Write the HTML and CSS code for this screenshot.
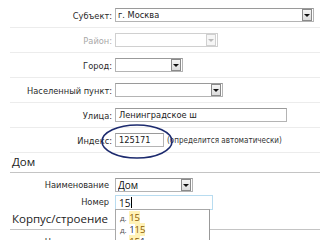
FILE: index.html
```html
<!DOCTYPE html>
<html lang="ru">
<head>
<meta charset="utf-8">
<link rel="stylesheet" href="styles.css">
</head>
<body>
<div class="page">
  <div class="row">
    <span class="lbl">Субъект:</span>
    <div class="sel w-subj"><span class="val">г. Москва</span><span class="arr"></span></div>
  </div>
  <div class="row">
    <span class="lbl dis">Район:</span>
    <div class="sel w-raion disabled"><span class="val"></span><span class="arr"></span></div>
  </div>
  <div class="row">
    <span class="lbl">Город:</span>
    <div class="sel w-gorod"><span class="val"></span><span class="arr"></span></div>
  </div>
  <div class="row">
    <span class="lbl">Населенный пункт:</span>
    <div class="sel w-np"><span class="val"></span><span class="arr"></span></div>
  </div>
  <div class="row">
    <span class="lbl">Улица:</span>
    <div class="inp w-street">Ленинградское ш</div>
  </div>
  <div class="row idx-row">
    <span class="lbl">Индекс:</span>
    <div class="inp w-idx">125171</div>
    <span class="hint">(определится автоматически)</span>
    <svg class="ellipse" width="74" height="38" viewBox="0 0 74 38"><ellipse cx="36" cy="18.5" rx="35" ry="16.5" fill="none" stroke="#1c2a6e" stroke-width="1.6"/></svg>
  </div>

  <div class="sect">Дом</div>
  <div class="row2 first">
    <span class="lbl2">Наименование</span>
    <div class="sel w-naim seg"><span class="val">Дом</span><span class="arr"></span></div>
  </div>
  <div class="row2 num-row">
    <span class="lbl2">Номер</span>
    <div class="inp w-num focus seg">15<span class="caret"></span></div>
    <ul class="drop">
      <li><span class="d">д.</span> <mark>15</mark></li>
      <li><span class="d">д.</span> 1<mark>15</mark></li>
      <li><span class="d">д.</span> <mark>15</mark>1</li>
    </ul>
  </div>
  <div class="sect">Корпус/строение</div>
  <div class="row2 first">
    <span class="lbl2">Наименование</span>
    <div class="sel w-naim seg"><span class="val"></span><span class="arr"></span></div>
  </div>
</div>
</body>
</html>
```
FILE: styles.css
```css
* { box-sizing: border-box; }
html, body { margin: 0; padding: 0; background: #fff; }
body {
  font-family: "DejaVu Sans Condensed", "DejaVu Sans", sans-serif;
  font-size: 9.2px;
  color: #222;
  width: 320px;
  height: 240px;
  overflow: hidden;
}
.page { padding: 3px 0 0 10px; }
.row {
  display: flex;
  align-items: center;
  height: 25px;
  padding: 5px 0 5px;
  border-bottom: 1px solid #ececec;
  position: relative;
}
.lbl {
  width: 102px;
  text-align: right;
  margin-right: 3px;
  white-space: nowrap;
  color: #2a2a2a;
}
.lbl.dis { color: #a8a8a8; }
.sel, .inp {
  height: 14px;
  border: 1px solid #b4b4b4;
  border-top-color: #9a9a9a;
  background: #fff;
  display: flex;
  align-items: center;
  line-height: 12px;
  white-space: nowrap;
}
.sel { justify-content: space-between; padding: 0 1px 0 2px; }
.inp { padding: 0 3px; }
.sel .val { overflow: hidden; }
.arr {
  width: 10px;
  height: 12px;
  border: 1px solid #8a8a8a;
  background: linear-gradient(#f4f4f4, #dcdcdc);
  display: flex;
  align-items: center;
  justify-content: center;
  flex: none;
}
.arr::after {
  content: "";
  border-left: 3px solid transparent;
  border-right: 3px solid transparent;
  border-top: 3px solid #111;
}
.disabled { border-color: #d0d0d0; }
.disabled .arr { border-color: #d0d0d0; background: #f6f6f6; }
.disabled .arr::after { border-top-color: #bbb; }
.w-subj { width: 199px; }
.w-raion { width: 103px; }
.w-gorod { width: 68px; }
.w-np { width: 108px; }
.w-street { width: 172px; }
.w-idx { width: 49px; }
.w-naim { width: 78px; }
.w-num { width: 98px; }
.hint { margin-left: 3px; font-size: 8px; color: #333; }
.ellipse { position: absolute; left: 91px; top: -5px; pointer-events: none; }

.sect {
  font-family: "Open Sans", sans-serif;
  font-size: 11.5px;
  color: #222;
  height: 20px;
  line-height: 18px;
  padding-left: 2px;
  border-bottom: 1px solid #c4c4c4;
}
.row2 {
  display: flex;
  align-items: flex-start;
  height: 17px;
  position: relative;
}
.row2.first { margin-top: 5px; }
.num-row { height: 15px; }
.lbl2 {
  width: 99px;
  text-align: right;
  margin-right: 6px;
  white-space: nowrap;
  color: #2a2a2a;
  line-height: 14px;
}
.seg { font-family: "Open Sans", sans-serif; font-size: 10px; color: #111; }
.focus { border-color: #b8dcf0; height: 15px; }
.caret { display: inline-block; width: 1px; height: 11px; background: #000; margin-left: 1px; }
.drop {
  position: absolute;
  left: 105px;
  top: 14px;
  width: 95px;
  height: 40px;
  margin: 0;
  padding: 2px 0 0 4px;
  list-style: none;
  background: #fff;
  border: 1px solid #a8a8a8;
  border-right-color: #999;
  z-index: 2;
  font-family: "Open Sans", sans-serif;
  font-size: 9.5px;
}
.drop li { height: 12px; line-height: 12px; color: #1a2a5a; }
.drop .d { color: #555; font-size: 8px; }
.drop mark { background: #fff2b8; color: #8a5a00; }
```
